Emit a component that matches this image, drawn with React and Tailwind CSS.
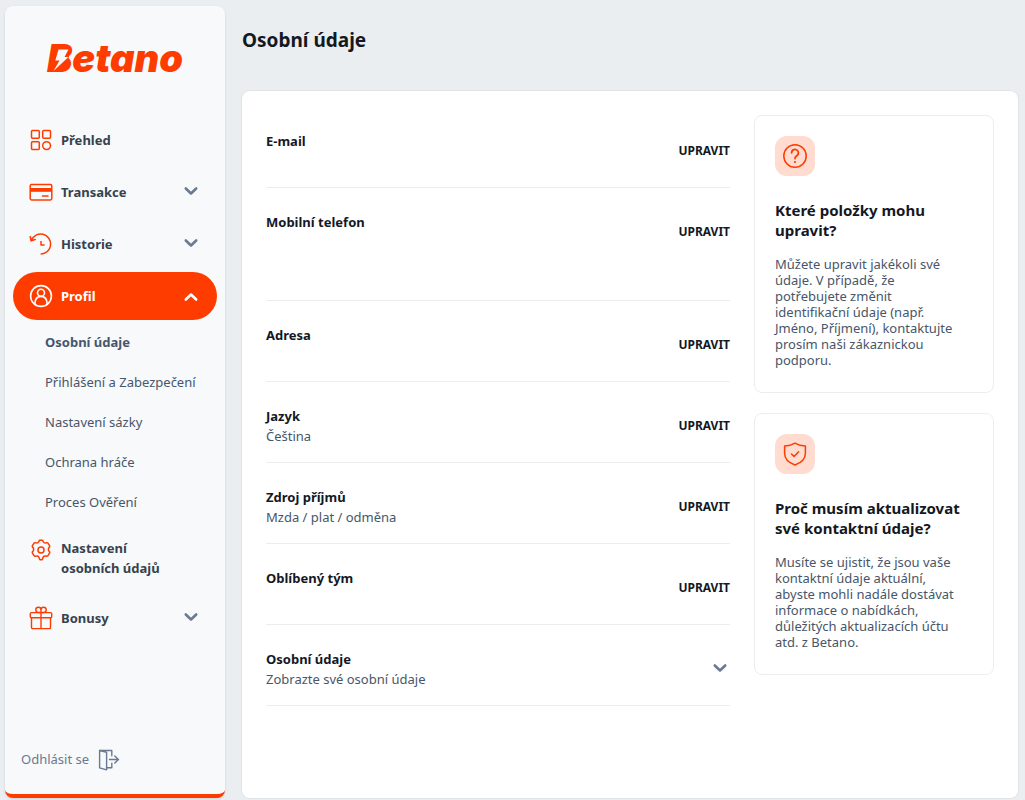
import React, { useState } from 'react';
import clsx from 'clsx';

const iconProps = {
  width: 24,
  height: 24,
  viewBox: '0 0 24 24',
  fill: 'none',
  stroke: 'currentColor',
  strokeWidth: 1.5,
  strokeLinecap: 'round',
  strokeLinejoin: 'round',
  'aria-hidden': true
};

const GridIcon = () => (
  <svg {...iconProps}>
    <rect x="2.5" y="2.5" width="7.8" height="7.8" rx="1" />
    <rect x="13.7" y="2.5" width="7.8" height="7.8" rx="1" />
    <rect x="2.5" y="13.7" width="7.8" height="7.8" rx="1" />
    <circle cx="17.6" cy="17.6" r="3.9" />
  </svg>
);

const CardIcon = () => (
  <svg {...iconProps}>
    <rect x="1.2" y="4.5" width="21.6" height="15.4" rx="1.4" />
    <path d="M1 8h22v3.800H1z" fill="currentColor" stroke="none" />
    <path d="M13.5 16h5.500" />
  </svg>
);

const HistoryIcon = () => (
  <svg {...iconProps}>
    <path d="M2.400 8.200A10 10 0 1 1 12.200 22" />
    <path d="M1.300 4.800l.9 4 3.900-1.300" strokeWidth="1.7" />
    <path d="M12 9v4h3.600" strokeLinecap="butt" />
  </svg>
);

const UserIcon = () => (
  <svg {...iconProps} strokeWidth="1.6">
    <circle cx="12" cy="12" r="10.4" />
    <circle cx="12" cy="8.8" r="3.5" />
    <path d="M5.800 20c.2-4.600 2.600-7.600 6.200-7.600s6 3 6.200 7.600" />
  </svg>
);

const GearIcon = () => (
  <svg {...iconProps}>
    <path d="M10.400 2.200h3.200c.4 2.300 2 3.200 4.200 2.400l1 .3 1.900 3-.1 1c-1.700 1.600-1.700 3.400 0 5l.1 1-1.900 3-1 .3c-2.200-.8-3.800.1-4.200 2.400l-.5 1.200h-2.200l-.5-1.200c-.4-2.300-2-3.200-4.200-2.400l-1-.3-1.900-3 .1-1c1.700-1.600 1.700-3.400 0-5l-.1-1 1.900-3 1-.3c2.200.8 3.800-.1 4.200-2.400z" />
    <circle cx="12" cy="12" r="3" />
  </svg>
);

const GiftIcon = () => (
  <svg {...iconProps} strokeWidth="1.4">
    <rect x="1.3" y="6.6" width="21.4" height="5.2" rx="1.2" />
    <path d="M2.500 11.800v9.600a1.200 1.200 0 0 0 1.200 1.200h16.600a1.200 1.200 0 0 0 1.200-1.200v-9.600M12 6.600v16" />
    <path d="M12 6.500H9.300a2.600 2.600 0 1 1 2.700-2.600zM12 6.500h2.700A2.600 2.600 0 1 0 12 3.900z" />
  </svg>
);

const LogoutIcon = () => (
  <svg {...iconProps} strokeWidth="1.4">
    <path d="M2.600 2.500l7 1.800v17.500l-7-2z" />
    <path d="M2.600 2.500h12.200v5.300M9.600 19.800h5.200v-4.600M12.500 11.500h9M17.800 8l3.700 3.500-3.700 3.500" />
  </svg>
);

const QuestionIcon = () => (
  <svg {...iconProps}>
    <circle cx="12" cy="12" r="11.2" />
    <path d="M8.600 8.800a3.400 3.400 0 1 1 5.400 2.700c-1.300.9-2 1.500-2 3.100" strokeWidth="1.8" />
    <circle cx="12" cy="18" r="1.1" fill="currentColor" stroke="none" />
  </svg>
);

const ShieldIcon = () => (
  <svg {...iconProps}>
    <path d="M12 1.200c3 1.900 6.400 2.700 10.400 2.900v7.100c0 5.400-4.300 9.600-10.400 11.800C5.900 20.800 1.600 16.600 1.600 11.200V4.100C5.600 3.900 9 3.100 12 1.200z" />
    <path d="M8.500 12l2.500 2.500 4.600-4.700" />
  </svg>
);

const Chevron = ({ open }) => (
  <svg width="16" height="16" viewBox="0 0 16 16" fill="none" stroke="currentColor" strokeWidth="2.6" strokeLinecap="round" strokeLinejoin="round" aria-hidden="true">
    <path d={open ? 'M2.800 11.500L8 6.500l5.200 5' : 'M2.800 4.500l5.200 5 5.200-5'} />
  </svg>
);

const NAV = [
  { label: 'Přehled', icon: GridIcon },
  { label: 'Transakce', icon: CardIcon, expandable: true },
  { label: 'Historie', icon: HistoryIcon, expandable: true },
  {
    label: 'Profil',
    icon: UserIcon,
    expandable: true,
    children: ['Osobní údaje', 'Přihlášení a Zabezpečení', 'Nastavení sázky', 'Ochrana hráče', 'Proces Ověření']
  },
  { label: 'Nastavení osobních údajů', icon: GearIcon },
  { label: 'Bonusy', icon: GiftIcon, expandable: true }
];

const ROWS = [
  { title: 'E-mail' },
  { title: 'Mobilní telefon', tall: true },
  { title: 'Adresa' },
  { title: 'Jazyk', value: 'Čeština' },
  { title: 'Zdroj příjmů', value: 'Mzda / plat / odměna' },
  { title: 'Oblíbený tým' },
  { title: 'Osobní údaje', value: 'Zobrazte své osobní údaje', expandable: true }
];

const CARDS = [
  {
    icon: QuestionIcon,
    title: 'Které položky mohu upravit?',
    text: 'Můžete upravit jakékoli své údaje. V případě, že potřebujete změnit identifikační údaje (např. Jméno, Příjmení), kontaktujte prosím naši zákaznickou podporu.'
  },
  {
    icon: ShieldIcon,
    title: 'Proč musím aktualizovat své kontaktní údaje?',
    text: 'Musíte se ujistit, že jsou vaše kontaktní údaje aktuální, abyste mohli nadále dostávat informace o nabídkách, důležitých aktualizacích účtu atd. z Betano.'
  }
];

// Wordmark with the lightning bolt laid over the first letter
function Logo() {
  return (
    <a href="#" className="relative mx-auto block h-10 font-[Inter,sans-serif] text-[38px] leading-10 font-black text-[#ff3c00] italic">
      Betano
      <svg width="34" height="40" viewBox="0 0 34 40" className="absolute top-0 left-0" aria-hidden="true">
        <path d="M7 8h16l-1 10-2 13H5z" fill="#ff3c00" />
        <path d="M11.500 11.500h10l-4 7.500h4L6.500 33l6-10.500h-4.200z" fill="#f7f9fb" />
      </svg>
    </a>
  );
}

function NavItem({ item, open, onToggle }) {
  const Icon = item.icon;
  const active = open && item.children;
  return (
    <li>
      <button
        type="button"
        onClick={onToggle}
        className={clsx(
          'flex w-full items-start gap-2 rounded-full px-4 py-3 text-left text-[13px] leading-5 font-bold',
          active ? 'bg-[#ff3c00] text-white' : 'text-[#36424f]'
        )}
      >
        <span className={clsx('shrink-0', active ? 'text-white' : 'text-[#ff3c00]')}>
          <Icon />
        </span>
        <span className={clsx('max-w-28 grow', item.label.length < 12 && 'py-0.5')}>{item.label}</span>
        {item.expandable && (
          <span className={clsx('ml-auto self-center pr-0.5', active ? 'text-white' : 'text-[#6a7a90]')}>
            <Chevron open={active} />
          </span>
        )}
      </button>
      {active && (
        <ul className="pt-0.5 pl-8">
          {item.children.map((child, i) => (
            <li key={child}>
              <a href="#" className={clsx('block py-2.5 text-[13px] leading-5 whitespace-nowrap text-[#475669]', i === 0 && 'font-bold')}>
                {child}
              </a>
            </li>
          ))}
        </ul>
      )}
    </li>
  );
}

function Sidebar() {
  const [openItem, setOpenItem] = useState('Profil');
  return (
    <aside className="flex w-[220px] shrink-0 flex-col rounded-lg border-b-4 border-[#ff3c00] bg-[#f7f9fb] shadow-sm">
      <div className="flex h-[110px] pt-8">
        <Logo />
      </div>
      <nav className="px-2">
        <ul className="flex flex-col gap-1">
          {NAV.map(item => (
            <NavItem
              key={item.label}
              item={item}
              open={openItem === item.label}
              onToggle={() => setOpenItem(v => (v === item.label ? null : item.label))}
            />
          ))}
        </ul>
      </nav>
      <button type="button" className="mt-auto mb-5 flex items-center gap-2 px-4 py-0.5 text-[13px] text-[#6a7a90]">
        Odhlásit se
        <LogoutIcon />
      </button>
    </aside>
  );
}

function DetailRow({ row }) {
  return (
    <li className={clsx('flex items-start justify-between border-b border-[#ebeef1] pt-6', row.tall ? 'pb-12' : 'pb-4')}>
      <div className="min-h-10 text-[13px] leading-5">
        <h2 className="font-bold text-[#14181f]">{row.title}</h2>
        {row.value && <p className="text-[#475669]">{row.value}</p>}
      </div>
      {row.expandable ? (
        <button type="button" aria-label={row.title} className="px-0.5 py-3 text-[#6a7a90]">
          <Chevron />
        </button>
      ) : (
        <button type="button" className="py-2.5 text-xs leading-5 font-bold text-[#14181f] uppercase">
          Upravit
        </button>
      )}
    </li>
  );
}

function InfoCard({ card }) {
  const Icon = card.icon;
  return (
    <section className="rounded-lg border border-[#ebeef1] px-5 pt-5 pb-6">
      <div className="flex size-10 items-center justify-center rounded-xl bg-[#ffdbd0] text-[#ff3c00]">
        <Icon />
      </div>
      <h2 className="mt-6 text-[15px] leading-5 font-bold text-[#14181f]">{card.title}</h2>
      <p className="mt-4 max-w-48 text-[13px] leading-4 text-[#475669]">{card.text}</p>
    </section>
  );
}

export default function App() {
  return (
    <div className="flex min-h-screen gap-[17px] bg-[#ebeef1] pt-1.5 pr-[7px] pb-0.5 pl-[5px] font-['Noto_Sans',sans-serif]">
      <Sidebar />
      <main className="flex min-w-0 grow flex-col">
        <h1 className="h-[85px] pt-5 text-[19px] leading-7 font-bold text-[#14181f]">Osobní údaje</h1>
        <div className="flex grow items-start gap-6 rounded-lg bg-white px-6 pt-4 shadow-[0_0_0_1px_#dfe4e8]">
          <ul className="min-w-0 grow">
            {ROWS.map(row => (
              <DetailRow key={row.title} row={row} />
            ))}
          </ul>
          <div className="flex w-60 shrink-0 flex-col gap-5 py-2">
            {CARDS.map(card => (
              <InfoCard key={card.title} card={card} />
            ))}
          </div>
        </div>
      </main>
    </div>
  );
}
